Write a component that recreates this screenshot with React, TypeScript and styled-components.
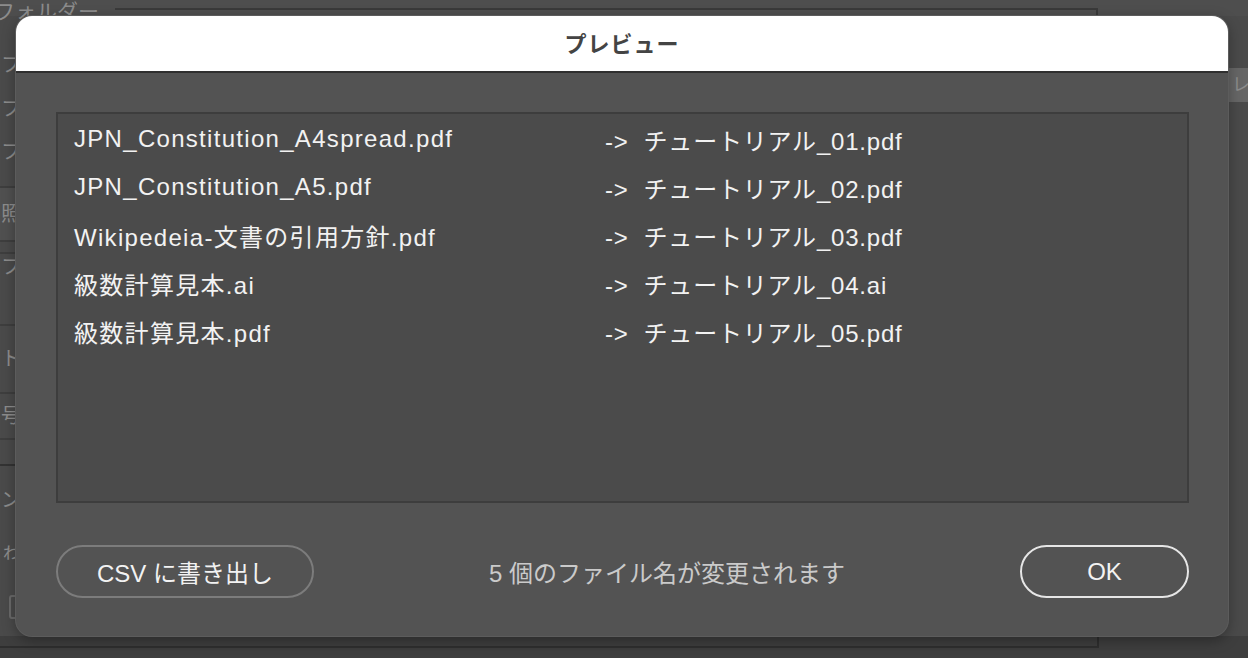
import styled, { createGlobalStyle } from 'styled-components';

const GlobalStyle = createGlobalStyle`
  html, body {
    margin: 0;
    padding: 0;
    background: #4a4a4a;
    overflow: hidden;
  }
  * {
    box-sizing: border-box;
  }
`;

const font = `"Liberation Sans", "Noto Sans CJK JP", sans-serif`;

const Backdrop = styled.div`
  position: relative;
  width: 1248px;
  height: 658px;
  display: flex;
  flex-direction: column;
  background: #4a4a4a;
  font-family: ${font};
  overflow: hidden;
`;

const TopStrip = styled.div`
  height: 16px;
  flex-shrink: 0;
  display: flex;
  align-items: flex-start;
  background: #4e4e4e;
`;

const FaintLabel = styled.span<{ $size?: number }>`
  font-size: ${(p) => p.$size ?? 20}px;
  line-height: 1;
  color: #8c8c8c;
  white-space: nowrap;
`;

const FolderLabel = styled(FaintLabel)`
  width: 121px;
  margin-left: -6px;
  margin-top: 1px;
`;

const TopFrame = styled.div`
  margin-top: 8px;
  width: 983px;
  height: 20px;
  border-top: 2px solid #3a3a3a;
  border-right: 2px solid #3a3a3a;
`;

const Middle = styled.div`
  flex: 1;
  display: flex;
  min-height: 0;
`;

const SideColumn = styled.div`
  width: 48px;
  display: flex;
  flex-direction: column;
`;

const SideRow = styled.div<{ $h: number; $bg?: string; $line?: string }>`
  height: ${(p) => p.$h}px;
  flex-shrink: 0;
  display: flex;
  align-items: center;
  padding-left: 1px;
  background: ${(p) => p.$bg ?? 'transparent'};
  border-bottom: ${(p) => (p.$line ? `2px solid ${p.$line}` : 'none')};
  overflow: hidden;
`;

const CheckBox = styled.div`
  width: 16px;
  height: 24px;
  margin-left: 8px;
  border: 2px solid #6a6a6a;
  border-radius: 3px;
`;

const Spacer = styled.div`
  flex: 1;
`;

const RightColumn = styled.div`
  width: 20px;
  display: flex;
  flex-direction: column;
  padding-top: 52px;
`;

const RightChip = styled.div`
  height: 34px;
  background: #666;
  display: flex;
  align-items: center;
  padding-left: 4px;
`;

const BottomStrip = styled.div`
  height: 22px;
  flex-shrink: 0;
  background: #3e3e3e;
  display: flex;
`;

const BottomFrame = styled.div`
  width: 1099px;
  height: 12px;
  border-bottom: 2px solid #2e2e2e;
  border-right: 2px solid #2e2e2e;
`;

const Dialog = styled.div`
  position: absolute;
  left: 16px;
  top: 16px;
  width: 1212px;
  height: 620px;
  display: flex;
  flex-direction: column;
  background: #535353;
  border-radius: 16px;
  overflow: hidden;
  box-shadow: 0 0 0 1px #5c5c5c, 0 4px 14px rgba(0, 0, 0, 0.35);
`;

const TitleBar = styled.div`
  height: 57px;
  flex-shrink: 0;
  display: flex;
  align-items: center;
  justify-content: center;
  padding-bottom: 3px;
  background: #ffffff;
  border-bottom: 2px solid #2f2f2f;
`;

const Title = styled.h1`
  margin: 0;
  font-family: ${font};
  font-size: 22px;
  font-weight: 700;
  color: #444444;
  letter-spacing: 1px;
`;

const Body = styled.div`
  flex: 1;
  display: flex;
  flex-direction: column;
  padding: 39px 39px 38px 40px;
`;

const ListBox = styled.div`
  height: 391px;
  background: #4b4b4b;
  border: 2px solid #3d3d3d;
  padding: 1px 16px;
  display: flex;
  flex-direction: column;
`;

const Row = styled.div`
  height: 48px;
  display: grid;
  grid-template-columns: 531px 1fr;
  align-items: center;
`;

const Cell = styled.span<{ $spacing: number }>`
  font-family: ${font};
  font-size: 24px;
  letter-spacing: ${(p) => p.$spacing}px;
  color: #f2f2f2;
  white-space: pre;
`;

const Footer = styled.div`
  margin-top: 42px;
  display: flex;
  align-items: center;
  justify-content: space-between;
`;

const PillButton = styled.button<{ $primary?: boolean; $w: number }>`
  width: ${(p) => p.$w}px;
  height: 53px;
  border-radius: 27px;
  background: transparent;
  border: 2px solid ${(p) => (p.$primary ? '#e6e6e6' : '#7c7c7c')};
  color: #f2f2f2;
  font-family: ${font};
  font-size: 24px;
  cursor: pointer;
  padding: 0;
`;

const Status = styled.span`
  font-family: ${font};
  font-size: 24px;
  color: #cacaca;
`;

const renames: [string, string][] = [
  ['JPN_Constitution_A4spread.pdf', '->  チュートリアル_01.pdf'],
  ['JPN_Constitution_A5.pdf', '->  チュートリアル_02.pdf'],
  ['Wikipedeia-文書の引用方針.pdf', '->  チュートリアル_03.pdf'],
  ['級数計算見本.ai', '->  チュートリアル_04.ai'],
  ['級数計算見本.pdf', '->  チュートリアル_05.pdf'],
];

export default function App() {
  return (
    <>
      <GlobalStyle />
      <Backdrop>
        <TopStrip>
          <FolderLabel $size={21}>フォルダー</FolderLabel>
          <TopFrame />
        </TopStrip>
        <Middle>
          <SideColumn>
            <SideRow $h={27} />
            <SideRow $h={44}>
              <FaintLabel>フ</FaintLabel>
            </SideRow>
            <SideRow $h={43}>
              <FaintLabel>フ</FaintLabel>
            </SideRow>
            <SideRow $h={44}>
              <FaintLabel>フ</FaintLabel>
            </SideRow>
            <SideRow $h={14} $line="#3e3e3e" />
            <SideRow $h={54} $bg="#505050" $line="#3e3e3e">
              <FaintLabel>照</FaintLabel>
            </SideRow>
            <SideRow $h={12} $line="#3e3e3e" />
            <SideRow $h={26}>
              <FaintLabel>ファ</FaintLabel>
            </SideRow>
            <SideRow $h={46} $line="#3e3e3e" />
            <SideRow $h={68} $line="#3e3e3e">
              <FaintLabel>ト</FaintLabel>
            </SideRow>
            <SideRow $h={46} $line="#3e3e3e">
              <FaintLabel>号</FaintLabel>
            </SideRow>
            <SideRow $h={26} $line="#333333" />
            <SideRow $h={68}>
              <FaintLabel>ン</FaintLabel>
            </SideRow>
            <SideRow $h={36}>
              <FaintLabel>ゎ</FaintLabel>
            </SideRow>
            <SideRow $h={74}>
              <CheckBox />
            </SideRow>
          </SideColumn>
          <Spacer />
          <RightColumn>
            <RightChip>
              <FaintLabel $size={18}>レ</FaintLabel>
            </RightChip>
          </RightColumn>
        </Middle>
        <BottomStrip>
          <BottomFrame />
        </BottomStrip>
        <Dialog>
          <TitleBar>
            <Title>プレビュー</Title>
          </TitleBar>
          <Body>
            <ListBox>
              {renames.map(([from, to]) => (
                <Row key={from}>
                  <Cell $spacing={1.3}>{from}</Cell>
                  <Cell $spacing={0.8}>{to}</Cell>
                </Row>
              ))}
            </ListBox>
            <Footer>
              <PillButton $w={258}>CSV に書き出し</PillButton>
              <Status>5 個のファイル名が変更されます</Status>
              <PillButton $w={169} $primary>
                OK
              </PillButton>
            </Footer>
          </Body>
        </Dialog>
      </Backdrop>
    </>
  );
}
